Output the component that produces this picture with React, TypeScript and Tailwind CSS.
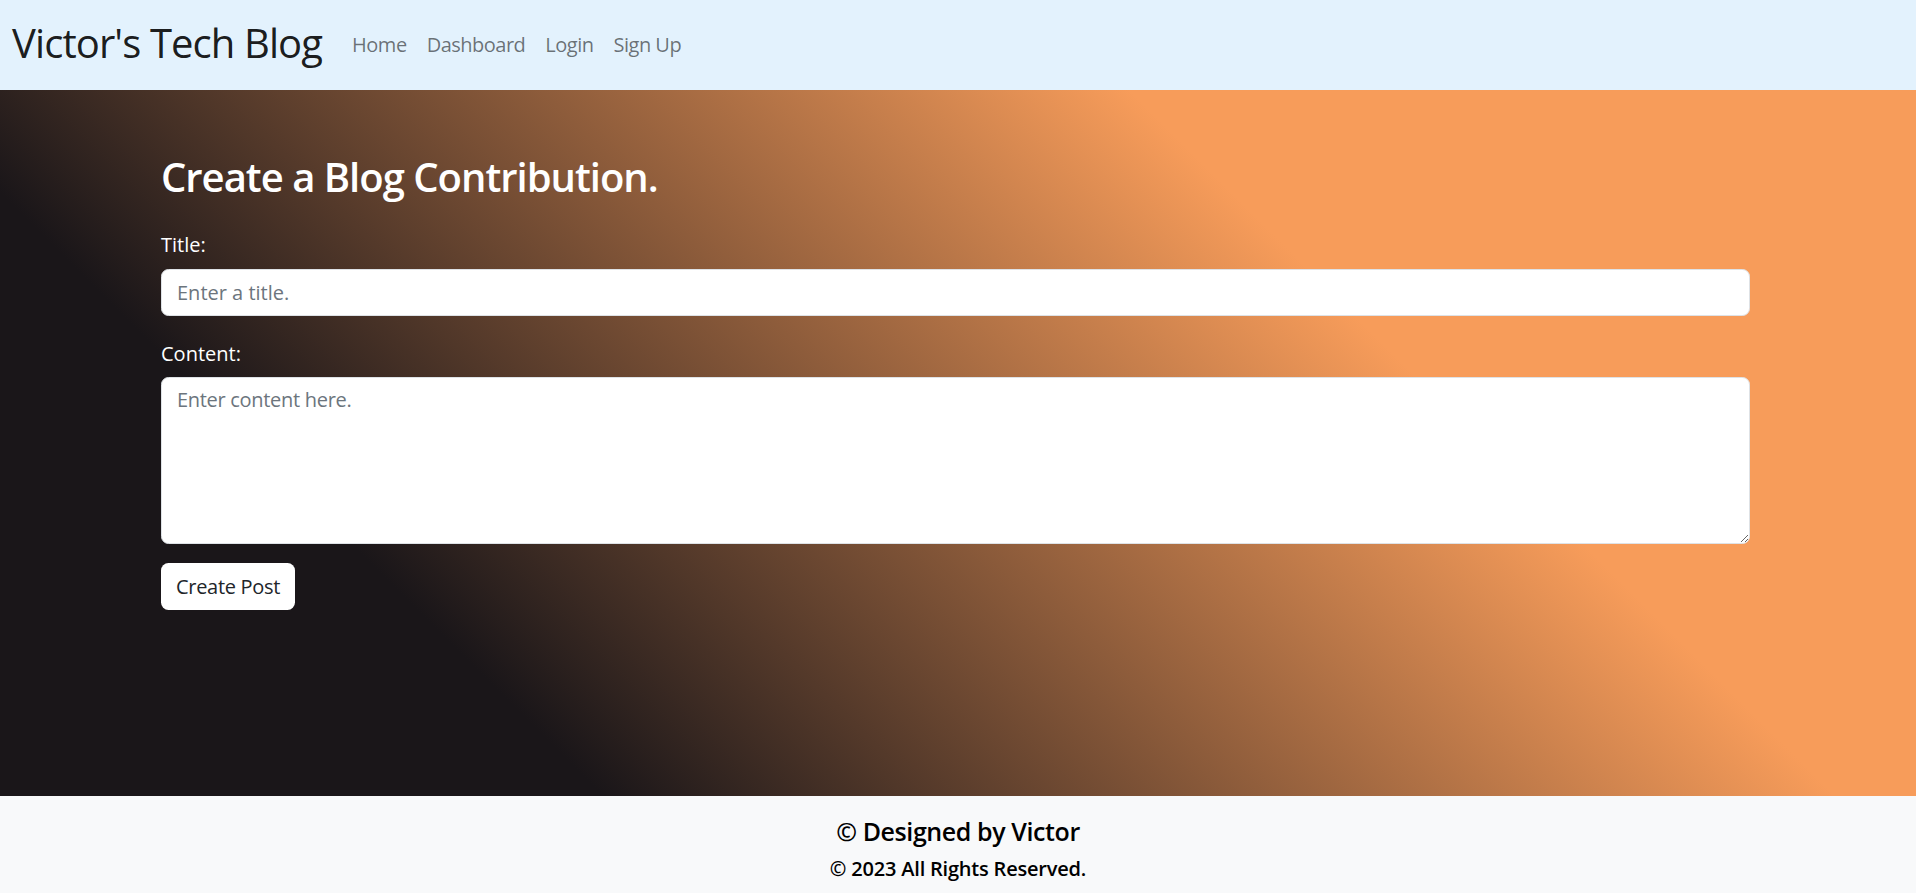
const font = { fontFamily: '"Open Sans", "Noto Sans", sans-serif' }

const links = ["Home", "Dashboard", "Login", "Sign Up"]

export default function App() {
  return (
    <div className="min-h-screen flex flex-col font-['Open_Sans',sans-serif] text-[#212529]" style={font}>
      <nav className="h-[90px] bg-[#e3f2fd] flex items-center pl-[12px]">
        <a href="#" className="text-[40px] leading-none tracking-[-0.9px] text-black/90 mr-[20px] pb-[4px]">
          Victor's Tech Blog
        </a>
        <ul className="flex items-center">
          {links.map((link) => (
            <li key={link}>
              <a href="#" className="block px-[10px] text-[20px] tracking-[-0.5px] text-black/55">
                {link}
              </a>
            </li>
          ))}
        </ul>
      </nav>

      <main className="h-[706px] bg-[linear-gradient(45deg,#1a1619_23%,#f79c5a_70%)]">
        <div className="ml-[161px] w-[1589px] pt-[63px]">
          <h2 className="text-[40px] leading-[48px] font-semibold tracking-[-1px] text-white mb-[29px]">
            Create a Blog Contribution.
          </h2>
          <form className="flex flex-col items-start">
            <label htmlFor="title" className="text-[20px] leading-[30px] text-white mb-[9px]">
              Title:
            </label>
            <input
              id="title"
              type="text"
              placeholder="Enter a title."
              className="w-full h-[47px] bg-white border border-[#dee2e6] rounded-[7.5px] px-[15px] text-[20px] placeholder:text-[#6c757d] outline-none mb-[23px]"
            />
            <label htmlFor="content" className="text-[20px] leading-[30px] text-white mb-[8px]">
              Content:
            </label>
            <textarea
              id="content"
              placeholder="Enter content here."
              className="w-full h-[167px] bg-white border border-[#dee2e6] rounded-[7.5px] px-[15px] py-[7px] text-[20px] leading-[30px] tracking-[-0.3px] placeholder:text-[#6c757d] outline-none mb-[19px]"
            />
            <button
              type="button"
              className="h-[47px] bg-white rounded-[7.5px] px-[15px] text-[20px] tracking-[-0.3px] text-[#212529]"
            >
              Create Post
            </button>
          </form>
        </div>
      </main>

      <footer className="h-[97px] bg-[#f8f9fa] flex flex-col items-center justify-center pt-[8px] text-black">
        <h5 className="text-[25px] leading-[30px] font-semibold tracking-[-0.4px]">© Designed by Victor</h5>
        <h6 className="text-[20px] leading-[26px] font-semibold tracking-[-0.2px] mt-[10px]">© 2023 All Rights Reserved.</h6>
      </footer>
    </div>
  )
}
